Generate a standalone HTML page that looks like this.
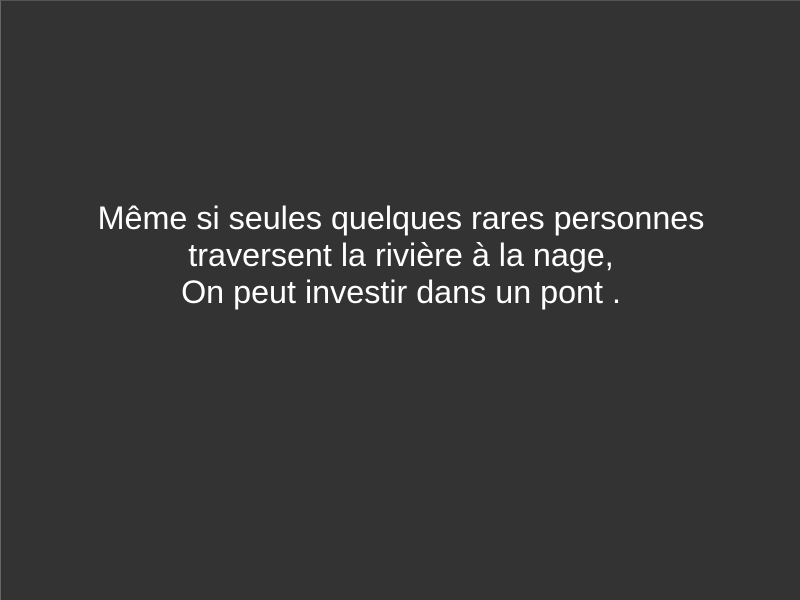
<!DOCTYPE html>
<html><head><meta charset="utf-8"><style>
html,body{margin:0;padding:0;}
body{width:800px;height:600px;background:#333333;position:relative;overflow:hidden;box-sizing:border-box;border-left:1px solid #666;border-top:1px solid #555;}
.t{position:absolute;left:0;width:800px;top:199px;text-align:center;color:#fff;font-family:"Liberation Sans",sans-serif;font-size:32.3px;line-height:37px;}
</style></head><body>
<div class="t">Même si seules quelques rares personnes<br>traversent la rivière à la nage,<br>On peut investir dans un pont .</div>
</body></html>
